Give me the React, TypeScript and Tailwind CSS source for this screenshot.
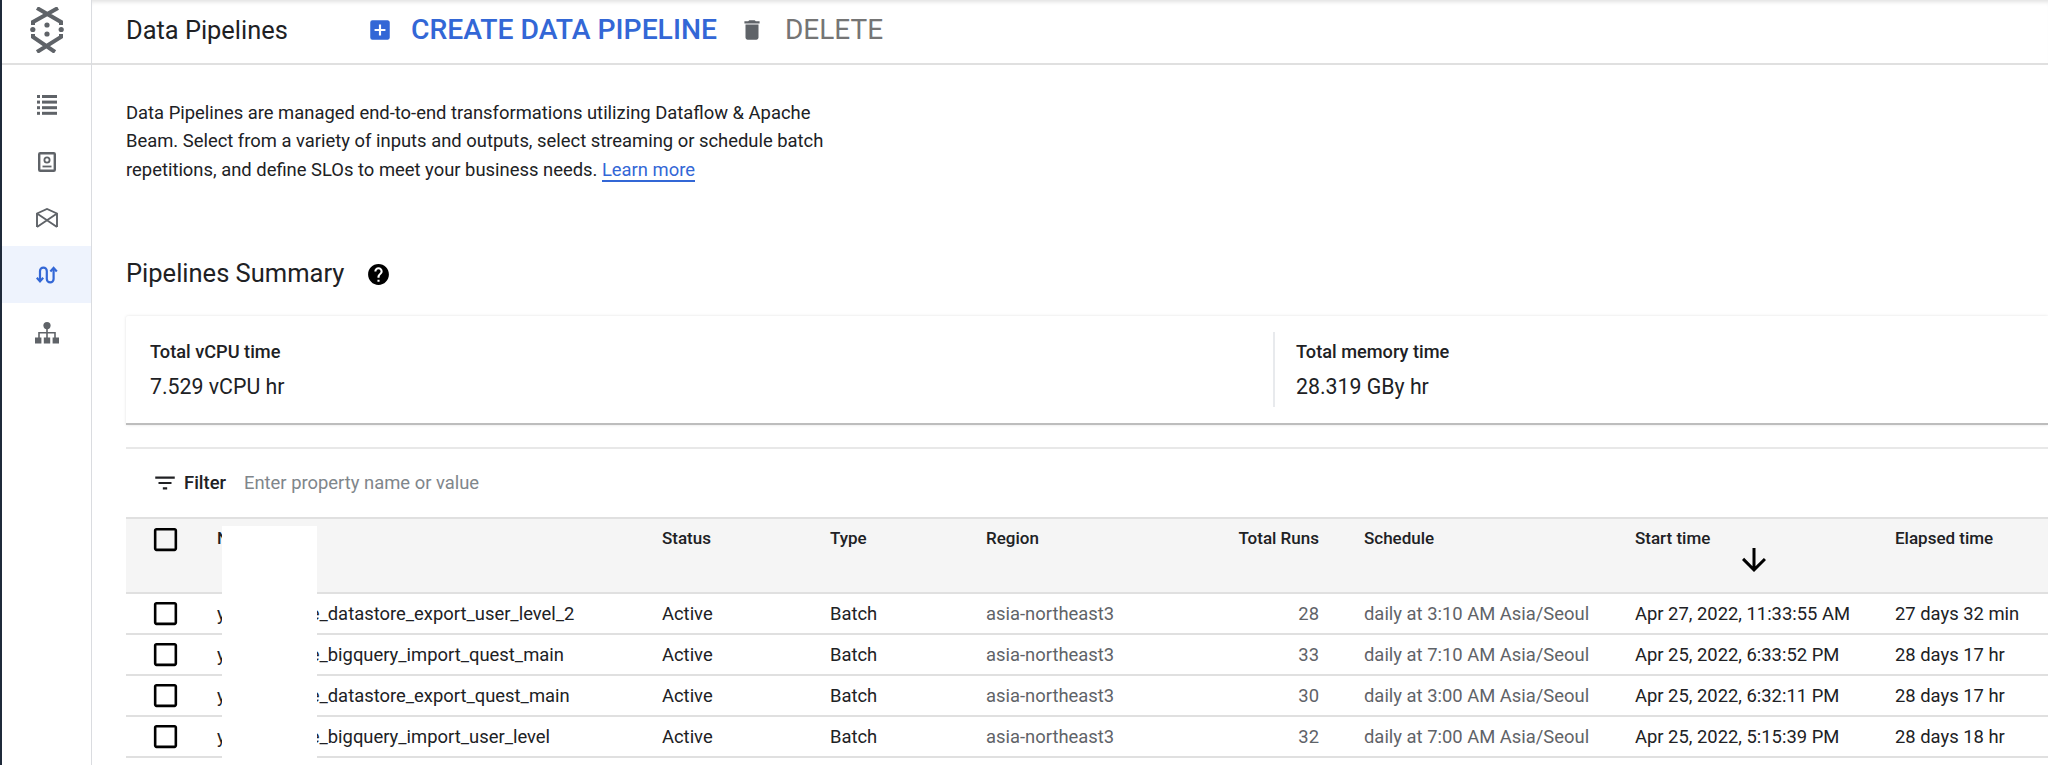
import {
  MdAddBox,
  MdArrowDownward,
  MdCheckBoxOutlineBlank,
  MdDelete,
  MdFilterList,
  MdHelp,
} from "react-icons/md";

const rows = [
  {
    name: "e_datastore_export_user_level_2",
    runs: 28,
    schedule: "daily at 3:10 AM Asia/Seoul",
    start: "Apr 27, 2022, 11:33:55 AM",
    elapsed: "27 days 32 min",
  },
  {
    name: "e_bigquery_import_quest_main",
    runs: 33,
    schedule: "daily at 7:10 AM Asia/Seoul",
    start: "Apr 25, 2022, 6:33:52 PM",
    elapsed: "28 days 17 hr",
  },
  {
    name: "e_datastore_export_quest_main",
    runs: 30,
    schedule: "daily at 3:00 AM Asia/Seoul",
    start: "Apr 25, 2022, 6:32:11 PM",
    elapsed: "28 days 17 hr",
  },
  {
    name: "e_bigquery_import_user_level",
    runs: 32,
    schedule: "daily at 7:00 AM Asia/Seoul",
    start: "Apr 25, 2022, 5:15:39 PM",
    elapsed: "28 days 18 hr",
  },
];

const gridCols =
  "grid grid-cols-[91px_445px_168px_156px_200px_178px_271px_260px_1fr]";

function Logo() {
  return (
    <svg width="34" height="46" viewBox="0 0 34 46" fill="none" stroke="#5f6368">
      <path d="M7 1 L31 15 V18 M28 1 L3 15 V18" strokeWidth="4" />
      <path d="M3 27 V30 L25 45 M31 27 V30 L7 45" strokeWidth="4" />
      <g fill="#5f6368" stroke="none">
        <circle cx="17" cy="18" r="2.6" />
        <circle cx="17" cy="27" r="2.6" />
        <circle cx="2.8" cy="22.5" r="2.6" />
        <circle cx="31.2" cy="22.5" r="2.6" />
      </g>
    </svg>
  );
}

function ListIcon() {
  return (
    <svg width="20" height="20" viewBox="0 0 20 20" fill="#5f6368">
      <rect x="0" y="0" width="3" height="3" />
      <rect x="5" y="0" width="15" height="3" />
      <rect x="0" y="5.6" width="3" height="3" />
      <rect x="5" y="5.6" width="15" height="3" />
      <rect x="0" y="11.2" width="3" height="3" />
      <rect x="5" y="11.2" width="15" height="3" />
      <rect x="0" y="16.8" width="3" height="3" />
      <rect x="5" y="16.8" width="15" height="3" />
    </svg>
  );
}

function BookIcon() {
  return (
    <svg width="18" height="20" viewBox="0 0 18 20" fill="none" stroke="#5f6368">
      <rect x="1.2" y="1.2" width="15.6" height="17.6" strokeWidth="2.4" rx="1" />
      <circle cx="9" cy="8" r="2.6" strokeWidth="1.8" />
      <path d="M4.5 14.5 H13.5" strokeWidth="1.8" />
    </svg>
  );
}

function MailIcon() {
  return (
    <svg width="22" height="20" viewBox="0 0 22 20" fill="none" stroke="#5f6368" strokeWidth="1.9">
      <path d="M1 19 V5.5 L11 1 L21 5.5 V19" />
      <path d="M1 5.5 L21 19 M21 5.5 L1 19" />
    </svg>
  );
}

function PipelineIcon() {
  return (
    <svg width="22" height="18" viewBox="0 0 22 18" fill="none" stroke="#3367d6" strokeWidth="2.2">
      <path d="M4 15 V5 A3.4 3.4 0 0 1 10.8 5 V13 A3.4 3.4 0 0 0 17.6 13 V3" />
      <path d="M0.8 11.8 L4 15.4 L7.2 11.8" />
      <path d="M14.4 5.4 L17.6 1.8 L20.8 5.4" />
    </svg>
  );
}

function OrgIcon() {
  return (
    <svg width="24" height="22" viewBox="0 0 24 22" fill="#5f6368">
      <circle cx="12" cy="3.6" r="3.6" />
      <path d="M11.2 6 H12.8 V10 H20.8 V16 H19.2 V11.6 H12.8 V16 H11.2 V11.6 H4.8 V16 H3.2 V10 H11.2 Z" />
      <rect x="0" y="15.5" width="6.4" height="6" />
      <rect x="8.8" y="15.5" width="6.4" height="6" />
      <rect x="17.6" y="15.5" width="6.4" height="6" />
    </svg>
  );
}

function Sidebar() {
  return (
    <aside className="flex w-[92px] shrink-0 flex-col border-r border-[#dadce0] border-l-2 border-l-[#1f2a3a]">
      <div className="flex h-[65px] items-center justify-center border-b-2 border-[#e0e0e0] pb-[3px]">
        <Logo />
      </div>
      <nav className="flex flex-col pt-[12px]">
        <div className="flex h-[56px] items-center justify-center"><ListIcon /></div>
        <div className="flex h-[57px] items-center justify-center"><BookIcon /></div>
        <div className="flex h-[56px] items-center justify-center"><MailIcon /></div>
        <div className="flex h-[57px] items-center justify-center bg-[#eef3fd]"><PipelineIcon /></div>
        <div className="flex h-[60px] items-center justify-center"><OrgIcon /></div>
      </nav>
    </aside>
  );
}

function Toolbar() {
  return (
    <header className="flex h-[65px] items-center border-b-2 border-[#e0e0e0] pb-[3px] pl-[34px] shadow-[inset_0_5px_4px_-3px_rgba(0,0,0,0.12)]">
      <h1 className="w-[241px] text-[25.4px] text-[#202124]">Data Pipelines</h1>
      <MdAddBox className="text-[26px] text-[#3367d6]" />
      <span className="ml-[18px] text-[28.3px] font-medium text-[#3367d6]">CREATE DATA PIPELINE</span>
      <MdDelete className="ml-[22px] text-[26px] text-[#5f6368]" />
      <span className="ml-[20px] text-[28px] text-[#757575]">DELETE</span>
    </header>
  );
}

function Summary() {
  return (
    <section className="flex h-[109px] items-center rounded-tl-[2px] border-b-2 border-[#bdbdbd] pl-[24px] shadow-[0_0_3px_rgba(0,0,0,0.12)]">
      <div className="w-[1123px]">
        <div className="text-[18.2px] font-medium leading-[24px] text-[#202124]">Total vCPU time</div>
        <div className="mt-[11px] text-[21.3px] leading-[24px] text-[#202124]">7.529 vCPU hr</div>
      </div>
      <div className="border-l-2 border-[#e8eaed] pl-[21px] py-[8px]">
        <div className="text-[18.2px] font-medium leading-[24px] text-[#202124]">Total memory time</div>
        <div className="mt-[11px] text-[21.3px] leading-[24px] text-[#202124]">28.319 GBy hr</div>
      </div>
    </section>
  );
}

function PipelineTable() {
  return (
    <section className="relative">
      <div className={`${gridCols} h-[77px] border-y-2 border-[#e0e0e0] bg-[#f5f5f5] text-[17px] font-medium text-[#202124]`}>
        <div className="pl-[24px] pt-[5px]"><MdCheckBoxOutlineBlank className="text-[31px] text-black" /></div>
        <div className="pt-[7px]">Name</div>
        <div className="pt-[7px]">Status</div>
        <div className="pt-[7px]">Type</div>
        <div className="pt-[7px]">Region</div>
        <div className="pr-[45px] pt-[7px] text-right">Total Runs</div>
        <div className="pt-[7px]">Schedule</div>
        <div className="relative pt-[7px]">
          Start time
          <MdArrowDownward className="absolute left-[101px] top-[23px] text-[36px] text-black" />
        </div>
        <div className="pt-[7px]">Elapsed time</div>
      </div>
      {rows.map((row) => (
        <div key={row.name} className={`${gridCols} h-[41px] items-center border-b-2 border-[#e0e0e0] text-[18.4px] text-[#202124]`}>
          <div className="pl-[24px]"><MdCheckBoxOutlineBlank className="text-[31px] text-black" /></div>
          <div className="flex">
            <span>y</span>
            <span className="ml-[84px]">{row.name}</span>
          </div>
          <div>Active</div>
          <div>Batch</div>
          <div className="text-[#5f6368]">asia-northeast3</div>
          <div className="pr-[45px] text-right text-[#5f6368]">{row.runs}</div>
          <div className="text-[#5f6368]">{row.schedule}</div>
          <div>{row.start}</div>
          <div>{row.elapsed}</div>
        </div>
      ))}
      {/* redacted part of the pipeline names */}
      <div className="absolute bottom-[-20px] left-[96px] top-[9px] w-[95px] bg-white" />
    </section>
  );
}

export default function App() {
  return (
    <div className="flex h-[765px] w-[2048px] overflow-hidden bg-white font-['Roboto',sans-serif]">
      <Sidebar />
      <main className="flex min-w-0 flex-1 flex-col">
        <Toolbar />
        <div className="pl-[34px]">
          <p className="mt-[34px] w-[715px] text-[18.4px] leading-[28.4px] text-[#202124]">
            Data Pipelines are managed end-to-end transformations utilizing Dataflow &amp; Apache Beam. Select from a variety of inputs and outputs, select streaming or schedule batch repetitions, and define SLOs to meet your business needs.{" "}
            <a className="border-b-2 border-[#3367d6] text-[#3367d6]">Learn more</a>
          </p>
          <div className="mt-[73px] flex h-[32px] items-center">
            <h2 className="text-[25.5px] text-[#202124]">Pipelines Summary</h2>
            <MdHelp className="ml-[22px] mt-[3px] text-[25px] text-black" />
          </div>
          <div className="mt-[27px]"><Summary /></div>
          <div className="mt-[22px] border-t-2 border-[#e8e8e8]" />
          <div className="flex h-[68px] items-center text-[18.4px]">
            <MdFilterList className="ml-[26px] text-[26px] text-[#202124]" />
            <span className="ml-[6px] font-medium text-[#202124]">Filter</span>
            <span className="ml-[18px] text-[#80868b]">Enter property name or value</span>
          </div>
          <PipelineTable />
        </div>
      </main>
    </div>
  );
}
